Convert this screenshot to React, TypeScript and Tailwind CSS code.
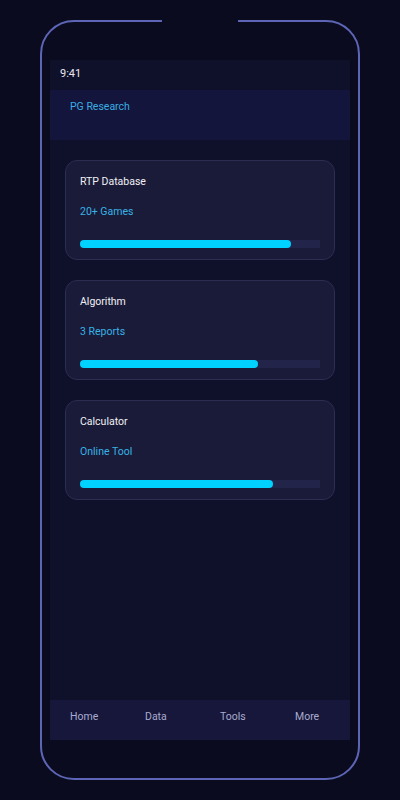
const cards = [
  { title: "RTP Database", sub: "20+ Games", pct: 88 },
  { title: "Algorithm", sub: "3 Reports", pct: 74 },
  { title: "Calculator", sub: "Online Tool", pct: 80.5 },
];

const tabs = ["Home", "Data", "Tools", "More"];

export default function App() {
  return (
    <div className="min-h-[800px] w-full bg-[#0b0b1f] pt-5 font-['Roboto',sans-serif]">
      <div className="relative mx-auto h-[760px] w-[320px] rounded-[34px] border-2 border-[#5d65b6] px-2 pt-[38px] pb-[38px]">
        {/* notch */}
        <div className="absolute -top-[3px] left-[120px] h-[22px] w-[76px] rounded-b-[10px] bg-[#0b0b1f]" />

        <div className="flex h-full flex-col bg-[#0f1029]">
          <div className="h-[30px] pl-[10px] pt-[7px] text-[11px] leading-[14px] text-[#e8e8f0]">
            9:41
          </div>
          <div className="h-[50px] bg-[#13153d] pl-5 pt-[10px] text-[10.5px] leading-[14px] text-[#3aaee0]">
            PG Research
          </div>

          <div className="flex flex-1 flex-col gap-5 px-[15px] pt-5">
            {cards.map((c) => (
              <div
                key={c.title}
                className="h-[100px] rounded-xl border border-[#2b2d52] bg-[#1a1b38] px-[14px] pt-[14px]"
              >
                <div className="text-[10.5px] leading-[14px] text-[#f0f0f5]">{c.title}</div>
                <div className="mt-4 text-[10.5px] leading-[14px] text-[#38b2e6]">{c.sub}</div>
                <div className="mt-[21px] h-2 w-[240px] bg-[#22244a]">
                  <div
                    className="h-2 rounded-full bg-[#00d2ff]"
                    style={{ width: `${c.pct}%` }}
                  />
                </div>
              </div>
            ))}
          </div>

          <div className="grid h-10 grid-cols-4 bg-[#16173a] pt-[10px]">
            {tabs.map((t) => (
              <div key={t} className="pl-5 text-[10.5px] leading-[14px] text-[#a9abcf]">
                {t}
              </div>
            ))}
          </div>
        </div>
      </div>
    </div>
  );
}
